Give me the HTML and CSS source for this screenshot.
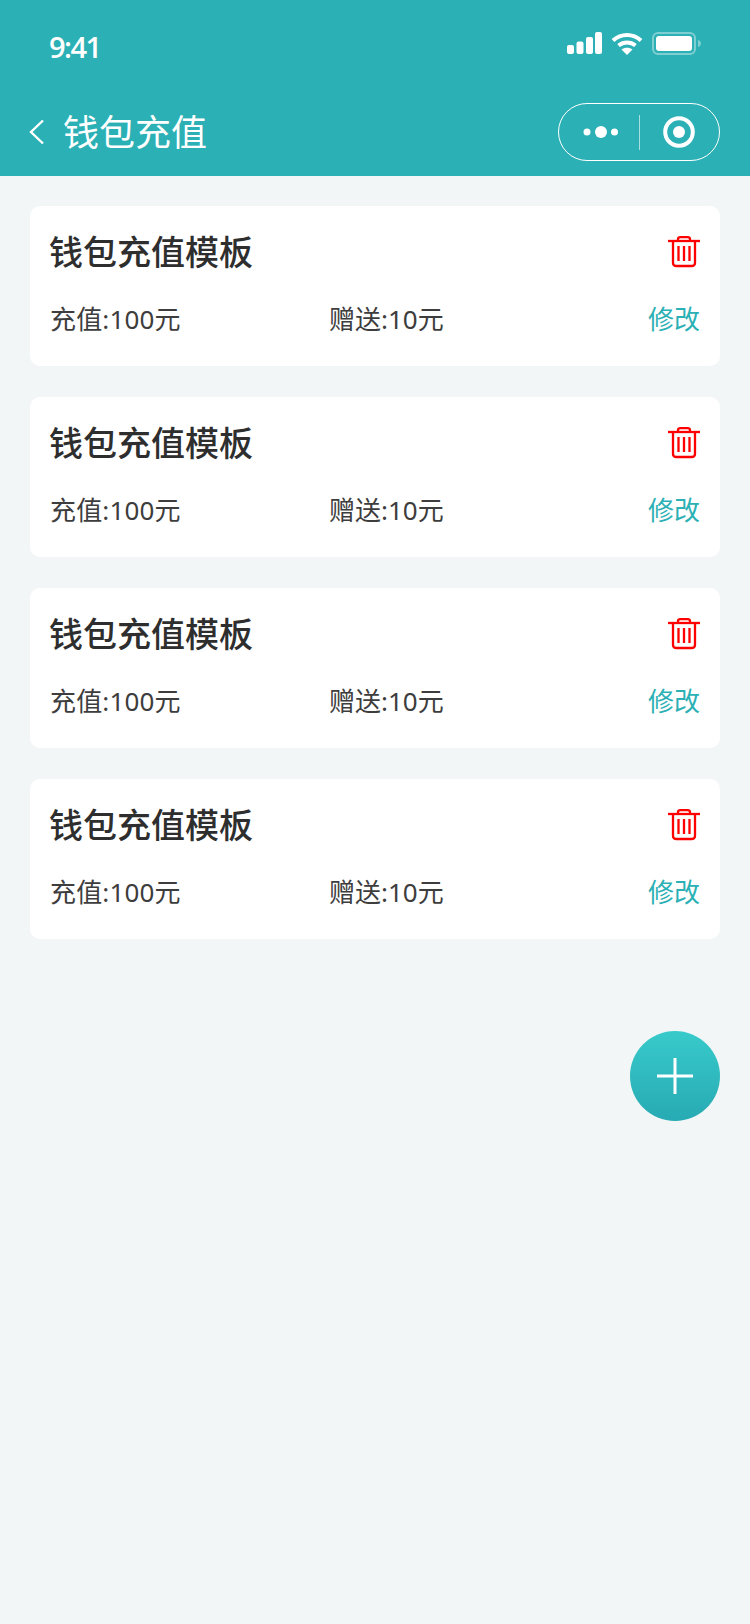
FILE: index.html
```html
<!DOCTYPE html>
<html lang="zh-CN">
<head>
<meta charset="utf-8">
<title>钱包充值</title>
<link rel="stylesheet" href="styles.css">
</head>
<body>
<div class="top">
  <div class="status">
    <span class="time">9:41</span>
    <div class="status-icons">
      <svg width="35" height="22" viewBox="0 0 35 22" fill="#fff"><rect x="0" y="13" width="7" height="9" rx="2"/><rect x="9.5" y="9.5" width="7" height="12.5" rx="2"/><rect x="19" y="5" width="7" height="17" rx="2"/><rect x="28" y="0" width="7" height="22" rx="2"/></svg>
      <svg width="32" height="23" viewBox="0 0 32 23" fill="none" stroke="#fff" stroke-width="4"><path d="M2 8.500C10 1 22 1 30 8.500"/><path d="M7.500 13.500C12.500 9.500 19.500 9.500 24.500 13.500"/><path d="M16 23l-5.500-5.500C13.500 15.300 18.500 15.300 21.500 17.500z" fill="#fff" stroke="none"/></svg>
      <svg width="50" height="23" viewBox="0 0 50 23"><rect x="1" y="1" width="42" height="21" rx="5" fill="none" stroke="#fff" stroke-opacity=".4" stroke-width="2"/><rect x="4" y="4" width="36" height="15" rx="3" fill="#fff"/><path d="M46 8c2 .6 3 2 3 3.500s-1 2.900-3 3.500z" fill="#fff" fill-opacity=".4"/></svg>
    </div>
  </div>
  <div class="nav">
    <svg class="back" width="16" height="26" viewBox="0 0 16 26" fill="none" stroke="#fff" stroke-width="2.400"><path d="M14 1.500L2 13l12 11.500"/></svg>
    <span class="nav-title">钱包充值</span>
    <div class="capsule">
      <div class="capsule-part">
        <svg class="dots" width="36" height="14" viewBox="0 0 36 14" fill="#fff"><circle cx="4" cy="7" r="3.500"/><circle cx="18" cy="7" r="6"/><circle cx="31.500" cy="7" r="3.500"/></svg>
      </div>
      <div class="capsule-line"></div>
      <div class="capsule-part">
        <svg width="32" height="32" viewBox="0 0 32 32"><circle cx="16" cy="16" r="13.800" fill="none" stroke="#fff" stroke-width="4"/><circle cx="16" cy="16" r="6" fill="#fff"/></svg>
      </div>
    </div>
  </div>
</div>

<div class="list">
  <div class="card">
    <div class="card-head">
      <span class="card-title">钱包充值模板</span>
      <svg class="trash" width="32" height="32" viewBox="0 0 32 32" fill="none" stroke="#f00" stroke-width="2.300"><path d="M0 5h32"/><path d="M10 5V3C10 1.800 11 1.200 12.500 1.200h7C21 1.200 22 1.800 22 3V5"/><path d="M5 5v22C5 29 6.500 30 8.500 30h15c2 0 3.500-1 3.500-3V5"/><path d="M10.500 10v15M16 10v15M21.500 10v15"/></svg>
    </div>
    <div class="card-row">
      <span class="amount">充值:100元</span>
      <span class="gift">赠送:10元</span>
      <span class="edit">修改</span>
    </div>
  </div>
  <div class="card">
    <div class="card-head">
      <span class="card-title">钱包充值模板</span>
      <svg class="trash" width="32" height="32" viewBox="0 0 32 32" fill="none" stroke="#f00" stroke-width="2.300"><path d="M0 5h32"/><path d="M10 5V3C10 1.800 11 1.200 12.500 1.200h7C21 1.200 22 1.800 22 3V5"/><path d="M5 5v22C5 29 6.500 30 8.500 30h15c2 0 3.500-1 3.500-3V5"/><path d="M10.500 10v15M16 10v15M21.500 10v15"/></svg>
    </div>
    <div class="card-row">
      <span class="amount">充值:100元</span>
      <span class="gift">赠送:10元</span>
      <span class="edit">修改</span>
    </div>
  </div>
  <div class="card">
    <div class="card-head">
      <span class="card-title">钱包充值模板</span>
      <svg class="trash" width="32" height="32" viewBox="0 0 32 32" fill="none" stroke="#f00" stroke-width="2.300"><path d="M0 5h32"/><path d="M10 5V3C10 1.800 11 1.200 12.500 1.200h7C21 1.200 22 1.800 22 3V5"/><path d="M5 5v22C5 29 6.500 30 8.500 30h15c2 0 3.500-1 3.500-3V5"/><path d="M10.500 10v15M16 10v15M21.500 10v15"/></svg>
    </div>
    <div class="card-row">
      <span class="amount">充值:100元</span>
      <span class="gift">赠送:10元</span>
      <span class="edit">修改</span>
    </div>
  </div>
  <div class="card">
    <div class="card-head">
      <span class="card-title">钱包充值模板</span>
      <svg class="trash" width="32" height="32" viewBox="0 0 32 32" fill="none" stroke="#f00" stroke-width="2.300"><path d="M0 5h32"/><path d="M10 5V3C10 1.800 11 1.200 12.500 1.200h7C21 1.200 22 1.800 22 3V5"/><path d="M5 5v22C5 29 6.500 30 8.500 30h15c2 0 3.500-1 3.500-3V5"/><path d="M10.500 10v15M16 10v15M21.500 10v15"/></svg>
    </div>
    <div class="card-row">
      <span class="amount">充值:100元</span>
      <span class="gift">赠送:10元</span>
      <span class="edit">修改</span>
    </div>
  </div>
</div>

<div class="add">
  <svg width="36" height="36" viewBox="0 0 36 36" stroke="#fff" stroke-width="3"><path d="M0 18h36M18 0v36"/></svg>
</div>
</body>
</html>
```

FILE: styles.css
```css
* {
  box-sizing: border-box;
}
html, body {
  margin: 0;
  height: 100%;
}
body {
  background: #f3f6f7;
  font-family: "Noto Sans", "Noto Sans CJK SC", sans-serif;
}

.top {
  height: 176px;
  background: #2bb0b5;
  color: #fff;
}
.status {
  height: 94px;
  padding: 32px 48px 0 49px;
  display: flex;
  justify-content: space-between;
  align-items: flex-start;
}
.time {
  font-family: "Open Sans", sans-serif;
  font-size: 29px;
  font-weight: 600;
  line-height: 30px;
  letter-spacing: -1.500px;
}
.status-icons {
  display: flex;
  align-items: flex-start;
  gap: 9px;
}
.nav {
  height: 76px;
  display: flex;
  align-items: center;
  padding: 0 30px 0 29px;
}
.nav-title {
  font-size: 36px;
  line-height: 50px;
  margin-left: 18px;
  margin-top: 1px;
  flex: 1;
}
.capsule {
  width: 162px;
  height: 58px;
  border: 1.500px solid #fff;
  border-radius: 29px;
  display: flex;
  align-items: center;
}
.capsule-part {
  flex: 1;
  display: flex;
  justify-content: center;
  align-items: center;
}
.dots {
  margin-left: 5px;
}
.capsule-line {
  width: 1px;
  height: 35px;
  background: rgba(255, 255, 255, .6);
}

.list {
  padding: 30px 30px 0;
  display: flex;
  flex-direction: column;
  gap: 31px;
}
.card {
  height: 160px;
  background: #fff;
  border-radius: 10px;
  padding: 0 20px;
}
.card-head {
  height: 88px;
  display: flex;
  justify-content: space-between;
  align-items: center;
}
.card-title {
  font-size: 34px;
  font-weight: 500;
  color: #2e2e2e;
  margin-left: -1px;
}
.trash {
  margin-top: 3px;
}
.card-row {
  display: flex;
  align-items: center;
  height: 48px;
  font-size: 26px;
  color: #3d3d3d;
}
.amount {
  width: 279px;
  letter-spacing: .15px;
}
.gift {
  flex: 1;
}
.edit {
  color: #2bb0b5;
}

.add {
  position: fixed;
  left: 630px;
  top: 1031px;
  width: 90px;
  height: 90px;
  border-radius: 50%;
  background: linear-gradient(#38cacb, #27aab3);
  display: flex;
  justify-content: center;
  align-items: center;
}
```
